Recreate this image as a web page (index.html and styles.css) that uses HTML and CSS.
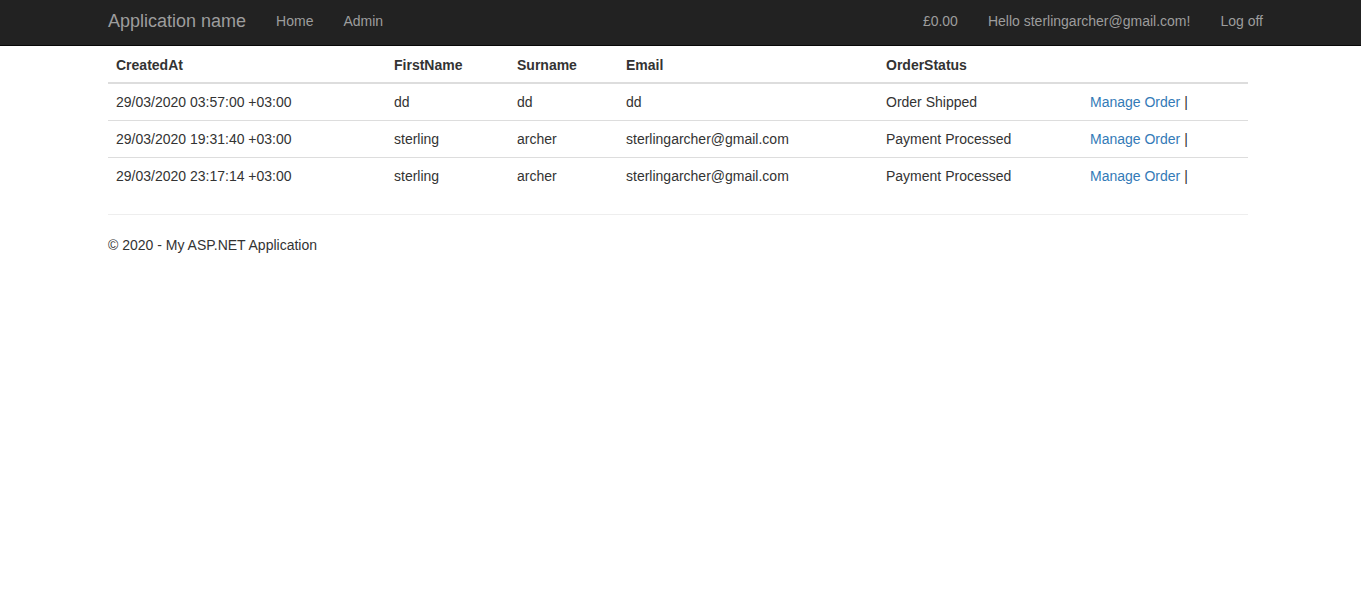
FILE: index.html
```html
<!DOCTYPE html>
<html>
<head>
<meta charset="utf-8">
<title>Orders - My ASP.NET Application</title>
<link rel="stylesheet" href="styles.css">
</head>
<body>
<nav class="navbar">
  <div class="nav-inner">
    <div class="nav-left">
      <a class="brand" href="#">Application name</a>
      <a class="nav-link" href="#">Home</a>
      <a class="nav-link" href="#">Admin</a>
    </div>
    <div class="nav-right">
      <a class="nav-link" href="#">£0.00</a>
      <a class="nav-link" href="#">Hello sterlingarcher@gmail.com!</a>
      <a class="nav-link" href="#">Log off</a>
    </div>
  </div>
</nav>
<main class="container">
  <table class="table">
    <thead>
      <tr>
        <th class="c1">CreatedAt</th>
        <th class="c2">FirstName</th>
        <th class="c3">Surname</th>
        <th class="c4">Email</th>
        <th class="c5">OrderStatus</th>
        <th class="c6"></th>
      </tr>
    </thead>
    <tbody>
      <tr>
        <td>29/03/2020 03:57:00 +03:00</td>
        <td>dd</td>
        <td>dd</td>
        <td>dd</td>
        <td>Order Shipped</td>
        <td><a href="#">Manage Order</a> |</td>
      </tr>
      <tr>
        <td>29/03/2020 19:31:40 +03:00</td>
        <td>sterling</td>
        <td>archer</td>
        <td>sterlingarcher@gmail.com</td>
        <td>Payment Processed</td>
        <td><a href="#">Manage Order</a> |</td>
      </tr>
      <tr>
        <td>29/03/2020 23:17:14 +03:00</td>
        <td>sterling</td>
        <td>archer</td>
        <td>sterlingarcher@gmail.com</td>
        <td>Payment Processed</td>
        <td><a href="#">Manage Order</a> |</td>
      </tr>
    </tbody>
  </table>
  <hr class="rule">
  <footer class="footer">
    <p>© 2020 - My ASP.NET Application</p>
  </footer>
</main>
</body>
</html>
```

FILE: styles.css
```css
* { box-sizing: border-box; }

html, body {
  margin: 0;
  padding: 0;
  background: #fff;
}

body {
  font-family: "Liberation Sans", Arial, Helvetica, sans-serif;
  font-size: 14px;
  line-height: 20px;
  color: #333;
}

a {
  color: #337ab7;
  text-decoration: none;
}

.navbar {
  background: #222;
  border-bottom: 1px solid #080808;
  height: 46px;
}

.nav-inner {
  width: 1185px;
  margin-left: 93px;
  display: flex;
  justify-content: space-between;
  height: 45px;
}

.nav-left, .nav-right {
  display: flex;
  align-items: stretch;
}

.brand {
  font-size: 18px;
  line-height: 20px;
  padding: 11px 15px 14px;
  color: #9d9d9d;
}

.nav-link {
  color: #9d9d9d;
  padding: 11px 15px 14px;
  line-height: 20px;
}

.container {
  width: 1140px;
  margin-left: 108px;
}

.table {
  width: 100%;
  border-collapse: collapse;
  border-spacing: 0;
  margin: 0 0 20px;
}

.table th,
.table td {
  padding: 8px;
  line-height: 20px;
  text-align: left;
  vertical-align: top;
}

.table th {
  font-weight: bold;
  padding: 9px 8px 7px;
  border-bottom: 2px solid #ddd;
}

.table td {
  border-top: 1px solid #ddd;
}

.table tbody tr:first-child td {
  border-top: 0;
}

.c1 { width: 278px; }
.c2 { width: 123px; }
.c3 { width: 109px; }
.c4 { width: 260px; }
.c5 { width: 204px; }
.c6 { width: 166px; }

.rule {
  margin: 20px 0;
  border: 0;
  border-top: 1px solid #eee;
  height: 0;
}

.footer p {
  margin: 0 0 10px;
}
```
